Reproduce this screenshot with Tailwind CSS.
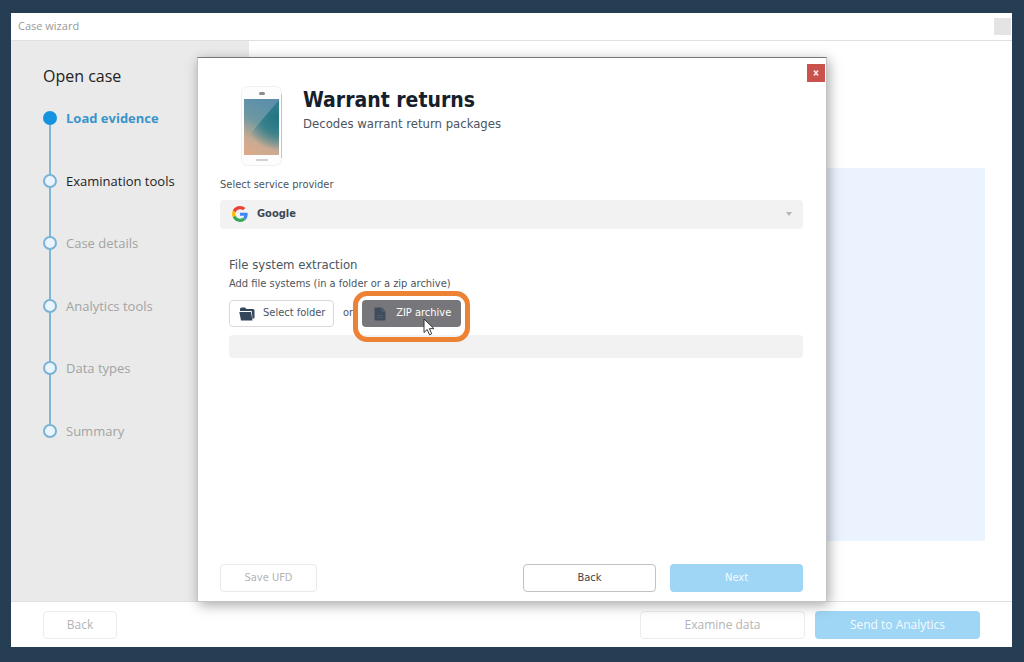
<!DOCTYPE html>
<html lang="en">
<head>
  <meta charset="UTF-8" />
  <meta name="viewport" content="width=device-width, initial-scale=1" />
  <title>Case wizard</title>
  <script src="https://cdn.jsdelivr.net/npm/@tailwindcss/browser@4"></script>
</head>
<body class="relative h-screen bg-[#263e54] pt-[13px] pr-3 pb-[15px] pl-[11px] font-['Open_Sans','Noto_Sans',sans-serif]">

  <!-- Main window -->
  <div class="flex h-full flex-col bg-white">
    <header class="flex h-7 shrink-0 items-center justify-between border-b border-[#e0e0e0] pl-[7px] pr-px">
      <h1 class="text-[11px] text-[#999]">Case wizard</h1>
      <button aria-label="Close window" class="size-[17px] bg-[#e4e4e4]"></button>
    </header>

    <div class="flex min-h-0 flex-1">
      <nav class="w-[238px] shrink-0 bg-[#eaeaea] pt-[23px] pl-8">
        <h2 class="text-[16px] leading-6 text-[#222]">Open case</h2>
        <ol class="relative mt-5 flex h-[333px] flex-col justify-between text-[13px] leading-5 text-[#a3a3a3] before:absolute before:inset-y-2 before:left-1.5 before:w-0.5 before:bg-[#7fb5d6]">
          <li class="relative flex items-center gap-[9px] font-bold text-[#3a94cc]">
            <span class="size-3.5 rounded-full bg-[#1593de]"></span>Load evidence
          </li>
          <li class="relative flex items-center gap-[9px] text-[#222]">
            <span class="size-3.5 rounded-full border-2 border-[#7ab3d5] bg-[#eaf4fc]"></span>Examination tools
          </li>
          <li class="relative flex items-center gap-[9px]">
            <span class="size-3.5 rounded-full border-2 border-[#7ab3d5] bg-[#eaf4fc]"></span>Case details
          </li>
          <li class="relative flex items-center gap-[9px]">
            <span class="size-3.5 rounded-full border-2 border-[#7ab3d5] bg-[#eaf4fc]"></span>Analytics tools
          </li>
          <li class="relative flex items-center gap-[9px]">
            <span class="size-3.5 rounded-full border-2 border-[#7ab3d5] bg-[#eaf4fc]"></span>Data types
          </li>
          <li class="relative flex items-center gap-[9px]">
            <span class="size-3.5 rounded-full border-2 border-[#7ab3d5] bg-[#eaf4fc]"></span>Summary
          </li>
        </ol>
      </nav>
      <main class="flex flex-1 pt-[127px] pr-[27px] pb-[60px] pl-7">
        <div class="flex-1 bg-[#ebf4fe]"></div>
      </main>
    </div>

    <footer class="flex h-[46px] shrink-0 items-center gap-2.5 border-t border-[#e0e0e0] pr-8 pl-8 text-[12px]">
      <button disabled class="mr-auto h-7 w-[74px] rounded border border-[#ececec] text-[#b4b4b4]">Back</button>
      <button disabled class="h-7 w-[165px] rounded border border-[#ececec] text-[#b4b4b4]">Examine data</button>
      <button disabled class="h-7 w-[165px] rounded bg-[#9fd5f5] text-[#f4fbff]">Send to Analytics</button>
    </footer>
  </div>

  <!-- Warrant returns dialog -->
  <div class="absolute inset-0 flex justify-center pt-[57px] pb-[60px]">
    <section role="dialog" aria-labelledby="dialog-title" class="relative flex w-[630px] flex-col border border-[#c4c4c4] border-t-[#777] bg-white pr-[23px] pb-[9px] pl-[22px] pt-7 font-['DejaVu_Sans_Condensed','Noto_Sans',sans-serif] text-[11px] text-[#4b5560] shadow-[2px_3px_12px_rgba(0,0,0,0.35)]">
      <button aria-label="Close" class="absolute top-1.5 right-px flex size-[18px] items-center justify-center bg-[#c9534c]">
        <svg class="size-2" viewBox="0 0 8 8" fill="none" stroke="#f8e0de" stroke-width="1.8"><path d="M2 1.5l4 5M6 1.5l-4 5" /></svg>
      </button>

      <div class="flex gap-5 pl-[21px]">
        <svg class="h-[81px] w-[42px]" viewBox="0 0 42 81">
          <defs>
            <linearGradient id="screen" x1="0.2" y1="1" x2="0.5" y2="0">
              <stop offset="0" stop-color="#dba98a" />
              <stop offset="0.25" stop-color="#c9ab92" />
              <stop offset="0.6" stop-color="#6d98a0" />
              <stop offset="1" stop-color="#5b8fab" />
            </linearGradient>
            <radialGradient id="glare" gradientUnits="userSpaceOnUse" cx="36" cy="32" r="32">
              <stop offset="0" stop-color="#166f7c" stop-opacity="0.85" />
              <stop offset="0.5" stop-color="#1d7480" stop-opacity="0.65" />
              <stop offset="1" stop-color="#1d7480" stop-opacity="0" />
            </radialGradient>
          </defs>
          <rect x="0.5" y="0.5" width="40" height="79" rx="6" fill="#fdfdfd" stroke="#f0f0f0" />
          <path d="M40.5 8v64" stroke="#c4c4c4" />
          <rect x="18" y="6" width="6" height="3" rx="1.5" fill="#8b8b8b" />
          <rect x="3" y="13" width="35" height="56" fill="url(#screen)" />
          <path d="M38 14L3 55v14h35z" fill="url(#glare)" />
          <rect x="15" y="73" width="12" height="2" rx="1" fill="#d0d0d0" />
        </svg>
        <div>
          <h2 id="dialog-title" class="text-[21px] leading-7 font-bold text-[#14202b]">Warrant returns</h2>
          <p class="text-[13px] leading-5">Decodes warrant return packages</p>
        </div>
      </div>

      <label for="provider" class="mt-2.5 leading-4">Select service provider</label>
      <div class="relative mt-[7px]">
        <select id="provider" class="block h-[29px] w-full appearance-none rounded-sm bg-[#f2f2f2] pl-[37px] text-[11px] font-bold text-[#3c4855]">
          <option>Google</option>
        </select>
        <svg class="pointer-events-none absolute top-1.5 left-3 size-4" viewBox="0 0 48 48">
          <path fill="#EA4335" d="M24 9.5c3.54 0 6.71 1.22 9.21 3.6l6.85-6.85C35.9 2.38 30.47 0 24 0 14.62 0 6.51 5.38 2.56 13.22l7.98 6.19C12.43 13.72 17.74 9.5 24 9.5z" />
          <path fill="#4285F4" d="M46.98 24.55c0-1.57-.15-3.09-.38-4.55H24v9.02h12.94c-.58 2.96-2.26 5.48-4.78 7.18l7.73 6c4.51-4.18 7.09-10.36 7.09-17.65z" />
          <path fill="#FBBC05" d="M10.53 28.59A14.5 14.5 0 0 1 9.77 24c0-1.6.27-3.14.76-4.59l-7.98-6.19A23.9 23.9 0 0 0 0 24c0 3.88.92 7.54 2.56 10.78l7.97-6.19z" />
          <path fill="#34A853" d="M24 48c6.48 0 11.93-2.13 15.89-5.81l-7.73-6c-2.15 1.45-4.92 2.3-8.16 2.3-6.26 0-11.57-4.22-13.47-9.91l-7.98 6.19C6.51 42.62 14.62 48 24 48z" />
        </svg>
        <svg class="pointer-events-none absolute top-3 right-[11px] h-1 w-1.5" viewBox="0 0 6 4"><path d="M0 0h6L3 4z" fill="#b4b4b4" /></svg>
      </div>

      <div class="mt-[26px] pl-[9px]">
        <h3 class="text-[13px] leading-5">File system extraction</h3>
        <p class="leading-[18px]">Add file systems (in a folder or a zip archive)</p>
        <div class="mt-[7px] flex items-center">
          <button class="flex h-[27px] w-[105px] items-center gap-2 rounded border border-[#d9d9d9] pl-[9px]">
            <svg class="h-3.5 w-4" viewBox="0 0 16 14">
              <path d="M1 2.2Q1 .5 2.500 .5h3.500l1.500 1.500H14q1.500 0 1.500 1.500V11l-2 1L12.800 4H1z" fill="#34475a" />
              <path d="M.3 5h11.700l1.500 8.500H2z" fill="#34475a" />
            </svg>
            Select folder
          </button>
          <span class="ml-[9px]">or</span>
          <div class="relative ml-[9px]">
            <button class="flex h-[27px] w-[99px] items-center gap-2.5 rounded bg-[#77777b] pl-3 text-white">
              <svg class="h-3.5 w-3" viewBox="0 0 12 14">
                <path d="M.5 1.5q0-1 1-1H8L11.500 4v8.500q0 1-1 1h-9q-1 0-1-1z" fill="#3f4c5b" />
                <path d="M8 .5V4h3.500" fill="none" stroke="#6d747d" stroke-width="0.8" />
                <path d="M3 8.500h6M3 10.500h6" stroke="#566270" stroke-width="0.8" />
              </svg>
              ZIP archive
            </button>
            <div class="pointer-events-none absolute -top-[9px] -right-[9px] -bottom-[15px] -left-[9px] rounded-[14px] border-[5px] border-[#ed8134]"></div>
            <svg class="pointer-events-none absolute top-[18px] left-[61px] h-[18px] w-3" viewBox="0 0 12 18">
              <path d="M1 1v13.500l3.200-3 2.300 5.300 2.200-1-2.300-5.100H11z" fill="#fff" stroke="#333" />
            </svg>
          </div>
        </div>
        <input type="text" readonly aria-label="Selected path" class="mt-2 block h-[23px] w-full rounded-sm bg-[#f2f2f2]" />
      </div>

      <div class="mt-auto flex gap-3.5">
        <button disabled class="mr-auto h-7 w-[97px] rounded border border-[#e9e9e9] text-[#b4b4b4]">Save UFD</button>
        <button class="h-7 w-[133px] rounded border border-[#c2c2c2] text-[#444]">Back</button>
        <button class="h-7 w-[133px] rounded bg-[#9fd5f5] text-[#f4fbff]">Next</button>
      </div>
    </section>
  </div>

</body>
</html>
